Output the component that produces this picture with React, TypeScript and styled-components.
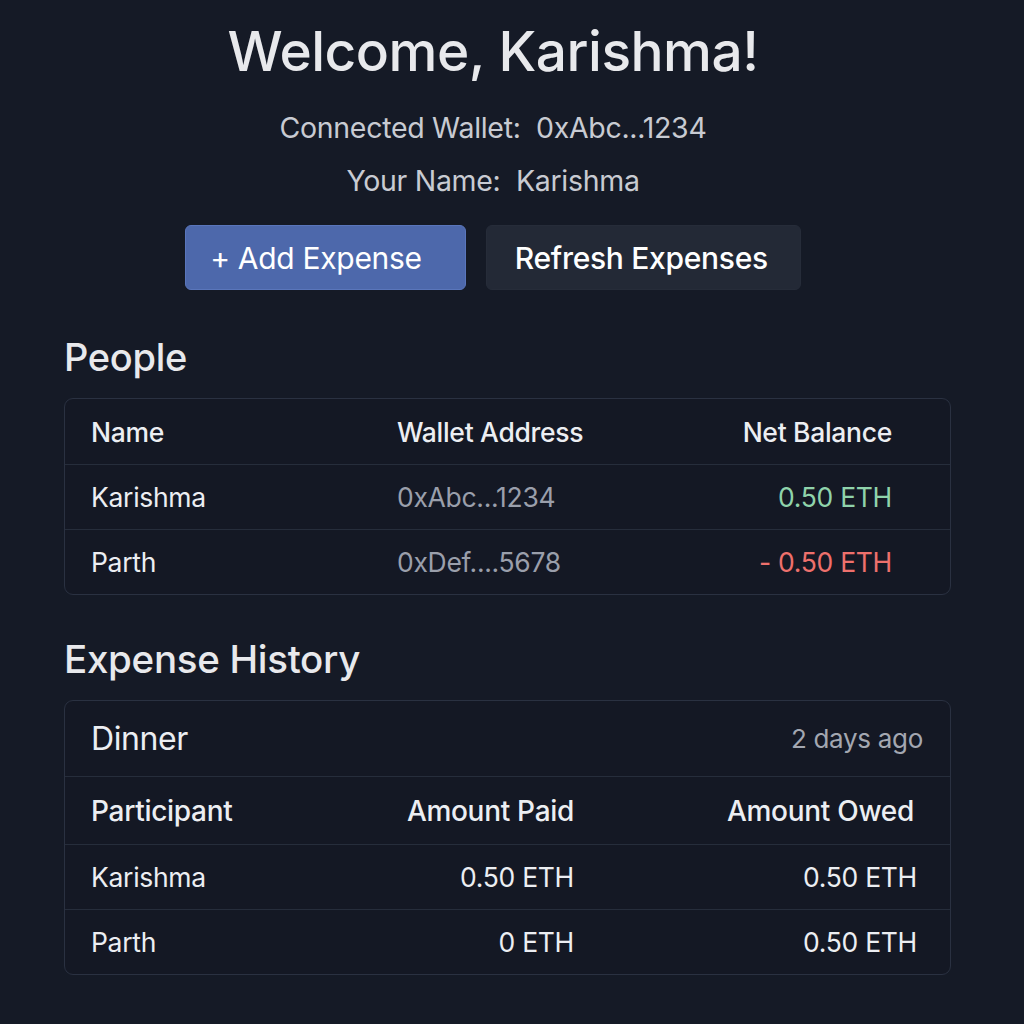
import React from "react";
import styled, { createGlobalStyle } from "styled-components";

const GlobalStyle = createGlobalStyle`
  html, body {
    margin: 0;
    padding: 0;
    background: #151a26;
  }
  body {
    font-family: Inter, "Noto Sans", sans-serif;
    color: #e6e8ec;
  }
  * { box-sizing: border-box; }
`;

const Page = styled.div`
  min-height: 1024px;
  padding: 18px 74px 40px 64px;
  display: flex;
  flex-direction: column;
`;

const Header = styled.header`
  width: 858px;
  display: flex;
  flex-direction: column;
  align-items: center;
`;

const Title = styled.h1`
  margin: 0;
  font-size: 55px;
  font-weight: 500;
  line-height: 66px;
  color: #e8e9ec;
  letter-spacing: -0.5px;
`;

const InfoLine = styled.p<{ $top: number }>`
  margin: ${(p) => p.$top}px 0 0;
  font-size: 28.5px;
  line-height: 36px;
  color: #c8cbd2;
  letter-spacing: -0.3px;
`;

const ButtonRow = styled.div`
  display: flex;
  gap: 20px;
  margin-top: 26px;
`;

const Button = styled.button<{ $primary?: boolean }>`
  height: 65px;
  padding: ${(p) => (p.$primary ? "0 43px 0 24px" : "0 32px 0 28px")};
  border-radius: 6px;
  font-family: Inter, "Noto Sans", sans-serif;
  font-size: 30px;
  letter-spacing: -0.3px;
  font-weight: ${(p) => (p.$primary ? 400 : 500)};
  color: #ffffff;
  background: ${(p) => (p.$primary ? "#4d68ab" : "#232936")};
  border: 1px solid ${(p) => (p.$primary ? "#5a76bb" : "#262c39")};
  cursor: pointer;
`;

const SectionTitle = styled.h2<{ $size: number; $top: number }>`
  margin: ${(p) => p.$top}px 0 0;
  font-size: ${(p) => p.$size}px;
  font-weight: 500;
  line-height: 46px;
  color: #e8e9ec;
  letter-spacing: -0.3px;
`;

const Card = styled.div<{ $top: number }>`
  margin-top: ${(p) => p.$top}px;
  width: 887px;
  border: 1px solid #2a3141;
  border-radius: 9px;
  background: #141824;
  overflow: hidden;
`;

const PeopleRow = styled.div`
  display: grid;
  grid-template-columns: 306px 1fr auto;
  align-items: center;
  height: 65px;
  padding: 0 58px 0 26px;
  font-size: 26.5px;
  letter-spacing: -0.3px;
  & + & {
    border-top: 1px solid #262d3b;
  }
`;

const HeadCell = styled.div<{ $right?: boolean }>`
  font-weight: 500;
  color: #eceef2;
  text-align: ${(p) => (p.$right ? "right" : "left")};
`;

const Cell = styled.div<{ $right?: boolean; $tone?: "muted" | "pos" | "neg" }>`
  font-weight: 400;
  font-size: 26.5px;
  text-align: ${(p) => (p.$right ? "right" : "left")};
  color: ${(p) =>
    p.$tone === "muted"
      ? "#9a9fab"
      : p.$tone === "pos"
      ? "#8fd3ab"
      : p.$tone === "neg"
      ? "#ee706c"
      : "#eceef2"};
`;

const ExpenseTitleRow = styled.div`
  display: flex;
  align-items: center;
  justify-content: space-between;
  height: 76px;
  padding: 0 27px 0 26px;
  border-bottom: 1px solid #262d3b;
`;

const ExpenseName = styled.div`
  font-size: 32px;
  font-weight: 400;
  color: #eceef2;
  letter-spacing: -0.4px;
`;

const ExpenseTime = styled.div`
  font-size: 26px;
  color: #a3a7b1;
  letter-spacing: -0.3px;
`;

const ExpenseRow = styled.div<{ $head?: boolean }>`
  display: grid;
  grid-template-columns: 200px 283px 1fr;
  align-items: center;
  height: ${(p) => (p.$head ? 67 : 65)}px;
  padding: ${(p) => (p.$head ? "0 36px 0 26px" : "0 33px 0 26px")};
  font-size: ${(p) => (p.$head ? 28 : 26.5)}px;
  letter-spacing: -0.3px;
  & + & {
    border-top: 1px solid #262d3b;
  }
`;

const people = [
  { name: "Karishma", wallet: "0xAbc...1234", balance: "0.50 ETH", tone: "pos" as const },
  { name: "Parth", wallet: "0xDef....5678", balance: "- 0.50 ETH", tone: "neg" as const },
];

const participants = [
  { name: "Karishma", paid: "0.50 ETH", owed: "0.50 ETH" },
  { name: "Parth", paid: "0 ETH", owed: "0.50 ETH" },
];

export default function App() {
  return (
    <>
      <GlobalStyle />
      <Page>
        <Header>
          <Title>Welcome, Karishma!</Title>
          <InfoLine $top={26}>Connected Wallet:&nbsp; 0xAbc...1234</InfoLine>
          <InfoLine $top={17}>Your Name:&nbsp; Karishma</InfoLine>
          <ButtonRow>
            <Button $primary>+ Add Expense</Button>
            <Button>Refresh Expenses</Button>
          </ButtonRow>
        </Header>

        <SectionTitle $size={38} $top={44}>People</SectionTitle>
        <Card $top={18}>
          <PeopleRow>
            <HeadCell>Name</HeadCell>
            <HeadCell>Wallet Address</HeadCell>
            <HeadCell $right>Net Balance</HeadCell>
          </PeopleRow>
          {people.map((p) => (
            <PeopleRow key={p.name}>
              <Cell>{p.name}</Cell>
              <Cell $tone="muted">{p.wallet}</Cell>
              <Cell $right $tone={p.tone}>{p.balance}</Cell>
            </PeopleRow>
          ))}
        </Card>

        <SectionTitle $size={38.5} $top={41}>Expense History</SectionTitle>
        <Card $top={18}>
          <ExpenseTitleRow>
            <ExpenseName>Dinner</ExpenseName>
            <ExpenseTime>2 days ago</ExpenseTime>
          </ExpenseTitleRow>
          <ExpenseRow $head>
            <HeadCell>Participant</HeadCell>
            <HeadCell $right>Amount Paid</HeadCell>
            <HeadCell $right>Amount Owed</HeadCell>
          </ExpenseRow>
          {participants.map((p) => (
            <ExpenseRow key={p.name}>
              <Cell>{p.name}</Cell>
              <Cell $right>{p.paid}</Cell>
              <Cell $right>{p.owed}</Cell>
            </ExpenseRow>
          ))}
        </Card>
      </Page>
    </>
  );
}
